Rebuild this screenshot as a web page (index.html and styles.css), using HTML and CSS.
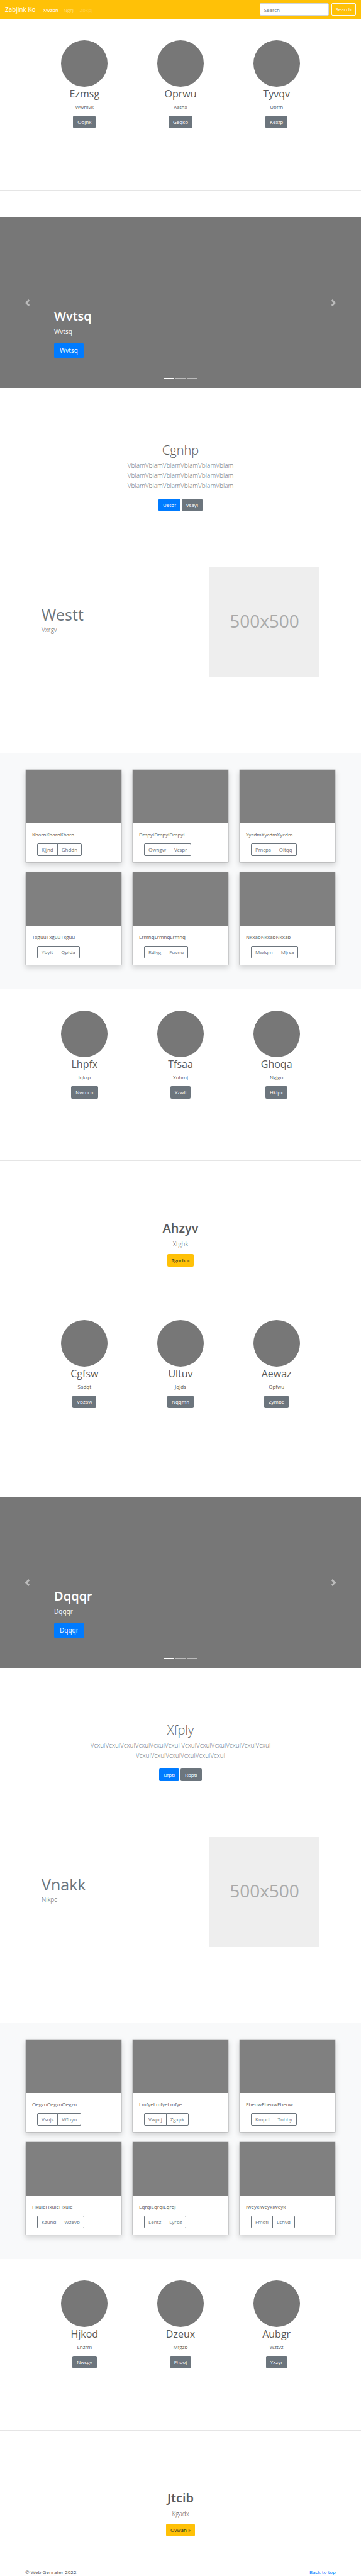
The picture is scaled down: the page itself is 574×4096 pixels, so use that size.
FILE: index.html
```html
<!DOCTYPE html>
<html lang="en">
<head>
<meta charset="utf-8">
<meta name="viewport" content="width=device-width, initial-scale=1">
<title>Zabjink Ko</title>
<link rel="stylesheet" href="styles.css">
</head>
<body id="top">
<header class="navbar">
  <a class="brand" href="#">Zabjink Ko</a>
  <nav class="nav-links">
    <a class="nav-link active" href="#">Xwzbh</a>
    <a class="nav-link" href="#">Ngrji</a>
    <a class="nav-link disabled" href="#">Zbkpj</a>
  </nav>
  <form class="search">
    <input class="search-input" type="search" placeholder="Search" aria-label="Search">
    <button class="btn btn-outline-light" type="button">Search</button>
  </form>
</header>
<main>
  <section class="features">
    <article class="feature"><div class="circle"></div><h2>Ezmsg</h2><p>Wwmvk</p><a class="btn btn-secondary" href="#">Oojnk</a></article>
    <article class="feature"><div class="circle"></div><h2>Oprwu</h2><p>Aatnx</p><a class="btn btn-secondary" href="#">Geqko</a></article>
    <article class="feature"><div class="circle"></div><h2>Tyvqv</h2><p>Uoffh</p><a class="btn btn-secondary" href="#">Kexfp</a></article>
  </section>
  <hr class="divider">

  <section class="carousel">
    <button class="control prev" type="button" aria-label="Previous"><svg viewBox="0 0 8 8"><path d="M5.25 0l-4 4 4 4 1.5-1.5L4.25 4l2.5-2.5L5.25 0z"/></svg></button>
    <div class="caption">
      <h1>Wvtsq</h1>
      <p>Wvtsq</p>
      <a class="btn btn-lg btn-primary" href="#">Wvtsq</a>
    </div>
    <button class="control next" type="button" aria-label="Next"><svg viewBox="0 0 8 8"><path d="M2.75 0l-1.5 1.5L3.75 4l-2.5 2.5L2.75 8l4-4-4-4z"/></svg></button>
    <div class="indicators"><span class="current"></span><span></span><span></span></div>
  </section>

  <section class="intro">
    <h1>Cgnhp</h1>
    <p class="lead">VblamVblamVblamVblamVblamVblam VblamVblamVblamVblamVblamVblam VblamVblamVblamVblamVblamVblam</p>
    <div class="actions"><a class="btn btn-primary" href="#">Uetdf</a><a class="btn btn-secondary" href="#">Vsayl</a></div>
  </section>

  <section class="featurette">
    <div class="featurette-text"><h2>Westt</h2><p class="lead">Vxrgv</p></div>
    <div class="placeholder">500x500</div>
  </section>
  <hr class="divider featurette-divider">

  <section class="album">
    <article class="card"><div class="thumb"></div><div class="card-body"><p>KbarnKbarnKbarn</p><div class="btn-group"><button type="button">Kjjnd</button><button type="button">Ghddn</button></div></div></article>
    <article class="card"><div class="thumb"></div><div class="card-body"><p>DmpyiDmpyiDmpyi</p><div class="btn-group"><button type="button">Qwngw</button><button type="button">Vcspr</button></div></div></article>
    <article class="card"><div class="thumb"></div><div class="card-body"><p>XycdmXycdmXycdm</p><div class="btn-group"><button type="button">Pmcps</button><button type="button">Oitqq</button></div></div></article>
    <article class="card"><div class="thumb"></div><div class="card-body"><p>TxguuTxguuTxguu</p><div class="btn-group"><button type="button">Ybyit</button><button type="button">Qpida</button></div></div></article>
    <article class="card"><div class="thumb"></div><div class="card-body"><p>LrmhqLrmhqLrmhq</p><div class="btn-group"><button type="button">Rdiyg</button><button type="button">Fuvnu</button></div></div></article>
    <article class="card"><div class="thumb"></div><div class="card-body"><p>NkxabNkxabNkxab</p><div class="btn-group"><button type="button">Mwlqm</button><button type="button">Mjrsa</button></div></div></article>
  </section>

  <section class="features">
    <article class="feature"><div class="circle"></div><h2>Lhpfx</h2><p>Iqkrp</p><a class="btn btn-secondary" href="#">Nwmcn</a></article>
    <article class="feature"><div class="circle"></div><h2>Tfsaa</h2><p>Xuhmj</p><a class="btn btn-secondary" href="#">Xzwli</a></article>
    <article class="feature"><div class="circle"></div><h2>Ghoqa</h2><p>Ngjgo</p><a class="btn btn-secondary" href="#">Hklpx</a></article>
  </section>
  <hr class="divider">

  <section class="cta">
    <h1>Ahzyv</h1>
    <p class="lead">Xtghk</p>
    <a class="btn btn-warning" href="#">Tgodk »</a>
  </section>

  <section class="features">
    <article class="feature"><div class="circle"></div><h2>Cgfsw</h2><p>Sadqt</p><a class="btn btn-secondary" href="#">Vbzaw</a></article>
    <article class="feature"><div class="circle"></div><h2>Ultuv</h2><p>Jqjds</p><a class="btn btn-secondary" href="#">Nqqmh</a></article>
    <article class="feature"><div class="circle"></div><h2>Aewaz</h2><p>Qpfwu</p><a class="btn btn-secondary" href="#">Zymbe</a></article>
  </section>
  <hr class="divider">

  <section class="carousel">
    <button class="control prev" type="button" aria-label="Previous"><svg viewBox="0 0 8 8"><path d="M5.25 0l-4 4 4 4 1.5-1.5L4.25 4l2.5-2.5L5.25 0z"/></svg></button>
    <div class="caption">
      <h1>Dqqqr</h1>
      <p>Dqqqr</p>
      <a class="btn btn-lg btn-primary" href="#">Dqqqr</a>
    </div>
    <button class="control next" type="button" aria-label="Next"><svg viewBox="0 0 8 8"><path d="M2.75 0l-1.5 1.5L3.75 4l-2.5 2.5L2.75 8l4-4-4-4z"/></svg></button>
    <div class="indicators"><span class="current"></span><span></span><span></span></div>
  </section>

  <section class="intro">
    <h1>Xfply</h1>
    <p class="lead">VcxulVcxulVcxulVcxulVcxulVcxul VcxulVcxulVcxulVcxulVcxulVcxul VcxulVcxulVcxulVcxulVcxulVcxul</p>
    <div class="actions"><a class="btn btn-primary" href="#">Bfpti</a><a class="btn btn-secondary" href="#">Rbptl</a></div>
  </section>

  <section class="featurette">
    <div class="featurette-text"><h2>Vnakk</h2><p class="lead">Nikpc</p></div>
    <div class="placeholder">500x500</div>
  </section>
  <hr class="divider featurette-divider">

  <section class="album">
    <article class="card"><div class="thumb"></div><div class="card-body"><p>OegznOegznOegzn</p><div class="btn-group"><button type="button">Vsojs</button><button type="button">Wfuyo</button></div></div></article>
    <article class="card"><div class="thumb"></div><div class="card-body"><p>LmfyeLmfyeLmfye</p><div class="btn-group"><button type="button">Vwpcj</button><button type="button">Zgxpk</button></div></div></article>
    <article class="card"><div class="thumb"></div><div class="card-body"><p>EbeuwEbeuwEbeuw</p><div class="btn-group"><button type="button">Kmprl</button><button type="button">Tnbby</button></div></div></article>
    <article class="card"><div class="thumb"></div><div class="card-body"><p>HxuleHxuleHxule</p><div class="btn-group"><button type="button">Kzuhd</button><button type="button">Wzevb</button></div></div></article>
    <article class="card"><div class="thumb"></div><div class="card-body"><p>EqrqiEqrqiEqrqi</p><div class="btn-group"><button type="button">Lehtz</button><button type="button">Lyrbz</button></div></div></article>
    <article class="card"><div class="thumb"></div><div class="card-body"><p>IweykIweykIweyk</p><div class="btn-group"><button type="button">Fmofi</button><button type="button">Lsnvd</button></div></div></article>
  </section>

  <section class="features">
    <article class="feature"><div class="circle"></div><h2>Hjkod</h2><p>Lhzrm</p><a class="btn btn-secondary" href="#">Nwsgv</a></article>
    <article class="feature"><div class="circle"></div><h2>Dzeux</h2><p>Mfgzb</p><a class="btn btn-secondary" href="#">Fhooj</a></article>
    <article class="feature"><div class="circle"></div><h2>Aubgr</h2><p>Wztvz</p><a class="btn btn-secondary" href="#">Yxzyr</a></article>
  </section>
  <hr class="divider">

  <section class="cta">
    <h1>Jtcib</h1>
    <p class="lead">Kgadx</p>
    <a class="btn btn-warning" href="#">Ovwah »</a>
  </section>
</main>
<footer class="footer">
  <p>© Web Genrater 2022</p>
  <a href="#top">Back to top</a>
</footer>
</body>
</html>
```
FILE: styles.css
```css
* { box-sizing: border-box; }

body {
  margin: 0;
  background: #fff;
  color: #5a5a5a;
  font: 400 8px/13px "Open Sans", "Noto Sans", sans-serif;
}

h1, h2, p { margin: 0; }
a { color: #007bff; text-decoration: none; }
button, input { font: inherit; }

/* Buttons */
.btn {
  display: block;
  width: fit-content;
  padding: 3px 6px;
  border: 1px solid transparent;
  border-radius: 2px;
  background: none;
  color: #fff;
  line-height: 12px;
}
.btn-primary { background: #007bff; }
.btn-secondary { background: #6c757d; }
.btn-warning { background: #ffc107; color: #212529; }
.btn-outline-light { border-color: #f8f9fa; color: #f8f9fa; }
.btn-lg {
  padding: 4px 8px;
  border-radius: 3px;
  font-size: 10px;
  line-height: 15px;
}

.lead {
  font-size: 10px;
  font-weight: 300;
  line-height: 16px;
}

/* Navigation */
.navbar {
  display: flex;
  align-items: center;
  padding: 5px 8px;
  background: #ffc107;
}
.brand {
  margin-right: 8px;
  color: #fff;
  font-size: 10px;
}
.nav-links { display: flex; }
.nav-link {
  padding: 0 4px;
  color: rgba(255, 255, 255, .5);
}
.nav-link.active { color: #fff; }
.nav-link.disabled { color: rgba(255, 255, 255, .25); }
.search {
  display: flex;
  gap: 4px;
  margin-left: auto;
}
.search-input {
  width: 110px;
  height: 20px;
  padding: 0 6px;
  border: 1px solid #ced4da;
  border-radius: 2px;
  background: #fff;
}
.search-input::placeholder { color: #6c757d; opacity: 1; }

/* Three columns with circles */
.features {
  display: grid;
  grid-template-columns: repeat(3, 1fr);
  padding: 34px 58px 0;
  text-align: center;
}
.circle {
  width: 74px;
  height: 74px;
  margin: 0 auto;
  border-radius: 50%;
  background: #777;
}
.feature h2 {
  margin-bottom: 3px;
  font-size: 16px;
  font-weight: 400;
  line-height: 22px;
}
.feature p { margin-bottom: 8px; }
.feature .btn { margin: 0 auto; }

.divider {
  margin: 98px 0 42px;
  border: 0;
  border-top: 1px solid #e5e5e5;
}
.featurette-divider { margin-top: 77px; }

/* Carousel */
.carousel {
  position: relative;
  display: flex;
  align-items: flex-end;
  height: 272px;
  background: #777;
}
.caption {
  flex: 1;
  padding-bottom: 47px;
  color: #fff;
}
.caption h1 {
  margin-bottom: 4px;
  font-size: 20px;
  font-weight: 600;
  line-height: 25px;
}
.caption p {
  margin-bottom: 10px;
  font-size: 10px;
  line-height: 16px;
}
.control {
  display: flex;
  flex: 0 0 15%;
  align-items: center;
  justify-content: center;
  align-self: stretch;
  padding: 0;
  border: 0;
  background: none;
  opacity: .5;
}
.control svg { width: 11px; height: 11px; fill: #fff; }
.indicators {
  position: absolute;
  right: 0;
  bottom: 14px;
  left: 0;
  display: flex;
  gap: 3px;
  justify-content: center;
}
.indicators span {
  width: 16px;
  height: 2px;
  background: #fff;
  opacity: .5;
}
.indicators .current { opacity: 1; }

/* Intro text */
.intro {
  padding: 86px 58px 0;
  text-align: center;
}
.intro h1 {
  margin-bottom: 3px;
  font-size: 20px;
  font-weight: 300;
  line-height: 26px;
}
.intro .lead {
  max-width: 320px;
  margin: 0 auto 13px;
  color: #6c757d;
}
.actions {
  display: flex;
  gap: 2px;
  justify-content: center;
}

/* Text beside a picture */
.featurette {
  display: flex;
  align-items: center;
  justify-content: space-between;
  padding: 89px 66px 0;
}
.featurette-text { padding-bottom: 10px; }
.featurette-text h2 {
  color: #6c757d;
  font-size: 25px;
  font-weight: 400;
  line-height: 32px;
}
.placeholder {
  display: grid;
  place-items: center;
  width: 175px;
  height: 175px;
  padding-bottom: 4px;
  background: #eee;
  color: #aaa;
  font-size: 28px;
}

/* Cards */
.album {
  display: grid;
  grid-template-columns: repeat(3, 1fr);
  gap: 14px 16px;
  padding: 26px 40px 38px;
  background: #f8f9fa;
}
.card {
  overflow: hidden;
  border: 1px solid rgba(0, 0, 0, .12);
  border-radius: 2px;
  background: #fff;
  background-clip: padding-box;
  box-shadow: 0 4px 8px rgba(0, 0, 0, .15);
}
.thumb { height: 85px; background: #808080; }
.card-body { padding: 11px 10px 10px; }
.card-body p { margin-bottom: 8px; }
.btn-group {
  display: flex;
  margin-left: 8px;
}
.btn-group button {
  padding: 3px 6px;
  border: 1px solid #6c757d;
  background: #fff;
  color: #6c757d;
  line-height: 12px;
}
.btn-group button:first-child { border-radius: 2px 0 0 2px; }
.btn-group button:last-child {
  margin-left: -1px;
  border-radius: 0 2px 2px 0;
}

/* Call to action */
.cta {
  padding: 53px 40px 51px;
  text-align: center;
}
.cta h1 {
  margin-bottom: 6px;
  font-size: 20px;
  font-weight: 600;
  line-height: 23px;
}
.cta .lead { margin-bottom: 8px; }
.cta .btn { margin: 0 auto; }

/* Footer */
.footer {
  display: flex;
  justify-content: space-between;
  padding: 0 40px;
  line-height: 12px;
}
```
